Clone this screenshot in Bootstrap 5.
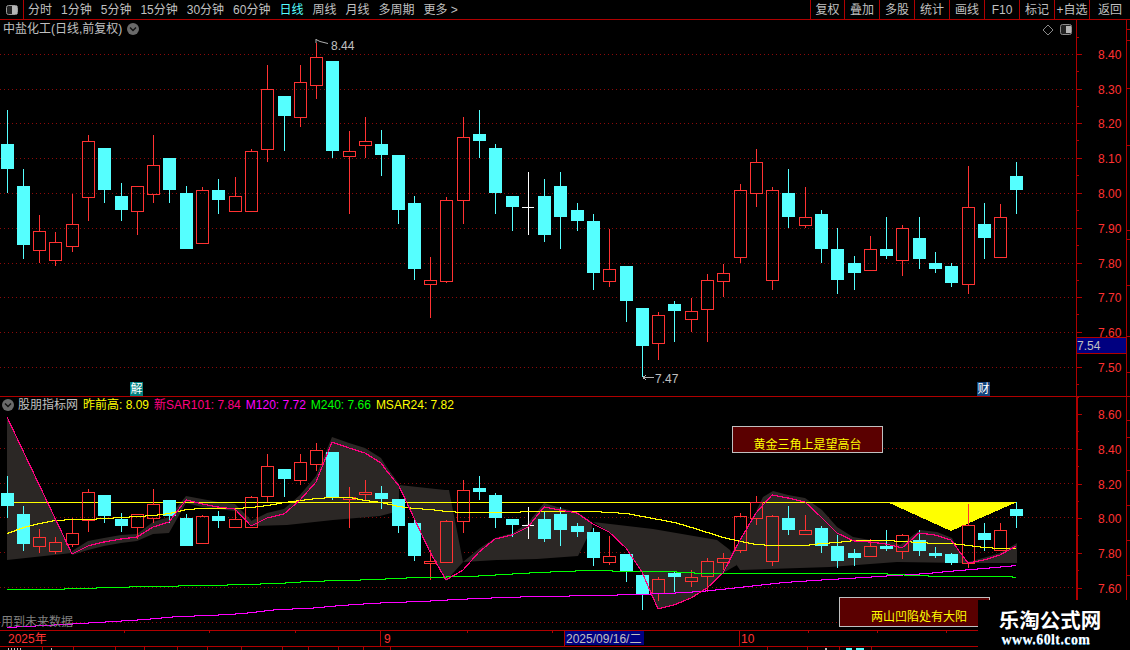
<!doctype html>
<html lang="zh">
<head>
<meta charset="utf-8">
<title>中盐化工</title>
<link href="https://cdn.jsdelivr.net/npm/bootstrap@5.3.0/dist/css/bootstrap.min.css" rel="stylesheet">
<style>
html,body{background:#000;margin:0;overflow:hidden}
.screen{width:1130px;height:650px;background:#000;color:#c0c0c0;font:12px/14px "Liberation Sans","Noto Sans CJK SC",sans-serif;overflow:hidden}
.screen svg{display:block}
.screen svg text{font-family:"Liberation Sans","Noto Sans CJK SC",sans-serif;font-size:12px}
.toolbar{height:20px;border-bottom:1px solid #b00000}
.icon-cell{width:24px;border-right:1px solid #b00000}
.tabs{gap:9px;padding-left:4px}
.tab-on{color:#55ffff}
.tool-cell{width:35px;border-left:1px solid #b00000}
.tool-first{width:34px}
.tool-last{width:41px}
.pane-a{height:377px;border-bottom:1px solid #b00000}
.pane-b{height:234px;border-bottom:1px solid #b00000}
.plot{width:1076px}
.axis{width:54px}
.title-row{left:3px;top:2px;gap:5px;height:14px}
.legend-row{left:2px;top:1px;height:14px}
.lg-gap{margin-left:5px}
.lg-yellow{color:#ffff00}
.lg-pink{color:#ff0080}
.lg-mag{color:#ff00ff}
.lg-green{color:#00ff00}
.evt{width:13px;height:14px;color:#fff;top:362px;line-height:14px;text-align:center}
.evt-a{left:130px;background:#008080}
.evt-b{left:977px;background:#12437a}
.note-box{background:#5a0000;border:1px solid #c0c0c0;color:#ffff00;width:151px}
.note-a{left:732px;top:29px;height:27px;padding-top:11px;text-align:center;padding-right:0}
.note-b{left:839px;top:200px;height:30px;padding:12px 0 0 31px}
.ghost{left:1px;top:218px;color:#808080}
.timebar{height:16px;border-bottom:1px solid #b00000}
.foot{height:3px}
.logo{right:0;bottom:0;width:152px;height:50px;background:#000;color:#fff;text-align:center}
.logo-cn{font:700 20.5px/22px "Noto Sans CJK SC",sans-serif;margin-top:8px;margin-left:-8px}
.logo-en{font:700 14px/16px "Liberation Serif",serif;letter-spacing:.4px;margin-top:2px;margin-left:-16px;text-shadow:0 1px 0 #4aa3d8}
</style>
</head>
<body>
<div class="screen position-relative">
  <div class="toolbar d-flex align-items-center">
    <div class="icon-cell h-100 d-flex align-items-center justify-content-center">
      <svg width="14" height="12" viewBox="0 0 14 12"><rect x="1.5" y="1.5" width="11" height="9" rx="2" fill="#222" stroke="#9a9a9a"/><rect x="7" y="2" width="5" height="8" fill="#b5b5b5"/></svg>
    </div>
    <div class="tabs d-flex">
      <span>分时</span><span>1分钟</span><span>5分钟</span><span>15分钟</span><span>30分钟</span><span>60分钟</span><span class="tab-on">日线</span><span>周线</span><span>月线</span><span>多周期</span><span>更多 &gt;</span>
    </div>
    <div class="d-flex ms-auto h-100">
      <div class="tool-cell tool-first d-flex align-items-center justify-content-center">复权</div>
      <div class="tool-cell d-flex align-items-center justify-content-center">叠加</div>
      <div class="tool-cell d-flex align-items-center justify-content-center">多股</div>
      <div class="tool-cell d-flex align-items-center justify-content-center">统计</div>
      <div class="tool-cell d-flex align-items-center justify-content-center">画线</div>
      <div class="tool-cell d-flex align-items-center justify-content-center">F10</div>
      <div class="tool-cell d-flex align-items-center justify-content-center">标记</div>
      <div class="tool-cell d-flex align-items-center justify-content-center">+自选</div>
      <div class="tool-cell tool-last d-flex align-items-center justify-content-center">返回</div>
    </div>
  </div>

  <div class="pane-a d-flex">
    <div class="plot position-relative">
      <svg id="upper" width="1076" height="376" viewBox="0 20 1076 376"></svg>
      <div class="title-row position-absolute d-flex align-items-center">
        <span>中盐化工(日线,前复权)</span>
        <svg width="12" height="12" viewBox="0 0 12 12"><circle cx="6" cy="6" r="6" fill="#6a6a6a"/><path d="M3 4.5 6 7.5 9 4.5" fill="none" stroke="#111" stroke-width="1.4"/></svg>
      </div>
      <div class="evt evt-a position-absolute">解</div>
      <div class="evt evt-b position-absolute">财</div>
    </div>
    <div class="axis"><svg id="axisA" width="54" height="376" viewBox="1076 20 54 376"></svg></div>
  </div>

  <div class="pane-b d-flex">
    <div class="plot position-relative">
      <svg id="lower" width="1076" height="233" viewBox="0 397 1076 233"></svg>
      <div class="legend-row position-absolute d-flex align-items-center">
        <svg class="me-1" width="12" height="12" viewBox="0 0 12 12"><circle cx="6" cy="6" r="6" fill="#6a6a6a"/><path d="M3 4.5 6 7.5 9 4.5" fill="none" stroke="#111" stroke-width="1.4"/></svg>
        <span>股朋指标网</span>
        <span class="lg-yellow lg-gap">昨前高: 8.09</span>
        <span class="lg-pink lg-gap">新SAR101: 7.84</span>
        <span class="lg-mag lg-gap">M120: 7.72</span>
        <span class="lg-green lg-gap">M240: 7.66</span>
        <span class="lg-yellow lg-gap">MSAR24: 7.82</span>
      </div>
      <div class="note-box note-a position-absolute">黄金三角上是望高台</div>
      <div class="note-box note-b position-absolute">两山凹陷处有大阳</div>
      <div class="ghost position-absolute">用到未来数据</div>
    </div>
    <div class="axis"><svg id="axisB" width="54" height="233" viewBox="1076 397 54 233"></svg></div>
  </div>

  <div class="timebar"><svg id="time" width="1130" height="15" viewBox="0 631 1130 15"></svg></div>
  <div class="foot"><svg id="foot" width="1130" height="3" viewBox="0 647 1130 3"></svg></div>

  <div class="logo position-absolute">
    <div class="logo-cn">乐淘公式网</div>
    <div class="logo-en">www.60lt.com</div>
  </div>
</div>

<script src="https://cdn.jsdelivr.net/npm/bootstrap@5.3.0/dist/js/bootstrap.bundle.min.js"></script>
<script>
var RED='#ff3232',CY='#55ffff',GRID='#8c0a0a',AX='#b00000';
/* x, high, bodyTop, bodyBottom, low, kind: d=down, u=up, w=doji */
var K=[[7,110,144,169,193,'d'],[23,169,186,245,259,'d'],[39,215,231,250,263,'u'],[55,232,242,260,266,'u'],[72,194,224,246,252,'u'],[88,135,141,197,221,'u'],[104,148,148,190,203,'d'],[121,183,196,210,221,'d'],[137,186,186,211,235,'u'],[153,135,165,194,203,'u'],[169,158,158,190,203,'d'],[186,186,193,249,249,'d'],[202,187,190,243,243,'u'],[218,179,190,200,214,'d'],[235,177,196,211,211,'u'],[251,149,151,211,211,'u'],[267,65,89,149,162,'u'],[284,96,96,116,151,'d'],[300,65,82,117,127,'u'],[316,43,57,85,99,'u'],[332,61,61,151,158,'d'],[349,131,151,156,214,'u'],[365,117,141,145,158,'u'],[381,130,144,155,176,'d'],[398,155,155,210,224,'d'],[414,196,203,269,280,'d'],[430,257,280,284,318,'u'],[446,197,200,281,283,'u'],[463,117,137,200,224,'u'],[479,110,134,141,158,'d'],[495,144,148,193,214,'d'],[512,196,196,207,231,'d'],[528,172,207,207,235,'w'],[544,179,196,235,242,'d'],[560,172,186,217,249,'d'],[577,203,210,221,231,'d'],[593,214,221,273,290,'d'],[609,229,269,281,287,'u'],[626,266,266,301,322,'d'],[642,308,308,346,377,'d'],[658,312,315,343,360,'u'],[674,301,304,311,342,'d'],[691,298,311,319,332,'u'],[707,274,280,309,342,'u'],[723,264,273,281,297,'u'],[740,184,190,257,263,'u'],[756,149,162,193,207,'u'],[772,187,190,280,290,'u'],[788,169,193,217,228,'d'],[805,187,217,225,228,'u'],[821,210,214,249,263,'d'],[837,228,249,280,294,'d'],[854,256,263,273,290,'d'],[870,236,249,270,270,'u'],[886,217,249,256,259,'d'],[902,225,228,260,276,'u'],[919,217,238,259,269,'d'],[935,252,263,269,273,'d'],[951,263,266,283,287,'d'],[968,166,207,284,294,'u'],[984,203,224,238,259,'d'],[1000,204,217,257,257,'u'],[1016,162,176,190,214,'d']];
function R(x,y,w,h,f){return '<rect x="'+x+'" y="'+y+'" width="'+w+'" height="'+h+'" fill="'+f+'" shape-rendering="crispEdges"/>';}
function candles(m){var s='';K.forEach(function(c){var x=c[0],hi=m(c[1]),t=m(c[2]),b=m(c[3]),lo=m(c[4]),k=c[5];
 var col=k=='d'?CY:(k=='w'?'#ffffff':RED);
 if(t>hi)s+=R(x,hi,1,t-hi,col);
 if(lo>b)s+=R(x,b,1,lo-b,col);
 if(k=='d')s+=R(x-6,t,13,Math.max(b-t,1),CY);
 else if(k=='w')s+=R(x-6,t,12,1,col);
 else s+='<rect x="'+(x-5.5)+'" y="'+(t+.5)+'" width="12" height="'+Math.max(b-t,1)+'" fill="none" stroke="'+RED+'" shape-rendering="crispEdges"/>';
});return s;}
function grid(ys){return ys.map(function(y){return '<line x1="0" x2="1076" y1="'+(y+.5)+'" y2="'+(y+.5)+'" stroke="'+GRID+'" stroke-dasharray="1 3" shape-rendering="crispEdges"/>';}).join('');}
function poly(p,col,w){return '<polyline points="'+p+'" fill="none" stroke="'+col+'" stroke-width="'+(w||1)+'" shape-rendering="crispEdges"/>';}
/* staircase run of whole pixels between the sampled values, as the charting program paints them */
function steps(p,col){var pts=p.split(' ').map(function(a){return a.split(',').map(Number);});var d='M'+pts[0][0]+' '+(pts[0][1]+.5);
 for(var i=1;i<pts.length;i++){var a=pts[i-1],b=pts[i],n=Math.abs(b[1]-a[1]);
  if(n==0){d+='H'+b[0];continue;}
  for(var j=1;j<=n;j++){d+='H'+Math.round(a[0]+(b[0]-a[0])*(j-.5)/n)+'V'+(a[1]+(b[1]-a[1])*j/n+.5);}
  d+='H'+b[0];}
 return '<path d="'+d+'" fill="none" stroke="'+col+'" shape-rendering="crispEdges"/>';}
function band(p){return '<polygon points="'+p+'" fill="#2b2725"/>';}

var upY=[54,89,123,158,193,228,263,297,332,367],upL=['8.40','8.30','8.20','8.10','8.00','7.90','7.80','7.70','7.60','7.50'];
var u=grid(upY)+candles(function(y){return y;});
u+='<path d="M316 39.5 320 41.5 328 43.5M316 39v4" fill="none" stroke="#b0b0b0"/><text x="331" y="50" fill="#c0c0c0">8.44</text>';
u+='<path d="M643 377.5H654M643 377.5 646 375M643 377.5 646 380" fill="none" stroke="#b0b0b0" shape-rendering="crispEdges"/><text x="655" y="383" fill="#c0c0c0">7.47</text>';
u+='<path d="M1048 25 1053 30 1048 35 1043 30Z" fill="none" stroke="#8a8a8a"/><rect x="1060.5" y="24.5" width="11" height="10" rx="2" fill="#222" stroke="#8a8a8a"/><rect x="1066" y="26" width="5" height="7" fill="#b5b5b5"/>';
document.getElementById('upper').innerHTML=u;

var loY=[448,483,517,552,587,622];
var pink='7,417 72,554 88,546 104,542 121,539 137,537 153,527 169,522 186,500 202,504 218,507 235,509 251,526 267,518 284,514 300,500 316,482 332,442 349,448 365,453 381,463 386,470 399,486 414,518 430,552 446,580 463,570 479,552 495,539 512,535 528,527 544,507 560,510 577,513 593,524 609,532 626,548 642,572 658,609 674,605 691,598 707,588 723,573 740,540 756,513 772,495 788,498 805,502 821,517 837,533 854,541 870,542 886,544 902,548 919,533 935,535 951,540 968,563 984,560 1000,555 1016,546';
var ma='7,533 23,527 39,523 55,520 72,519 88,519 104,518 121,517 137,516 153,515 169,513 186,509 202,508 218,508 235,508 251,507 267,505 284,502 300,500 316,498 332,497 349,497 365,500 381,502 398,506 414,508 430,509 446,511 463,512 479,512 495,512 512,512 528,511 544,511 560,511 577,511 593,511 609,512 626,513 642,516 658,519 674,522 691,527 707,532 723,537 740,541 756,544 772,545 788,545 805,545 821,543 837,542 854,540 870,540 886,540 902,541 919,542 935,543 951,543 968,545 984,547 1000,548 1016,548';
var green='7,589 47,589 80,588 145,586 210,585 243,584 277,583 308,581 340,580 380,579 390,578 422,577 470,576 503,574 537,572 587,570 637,571 667,571 703,573 878,573 912,575 943,576 1008,576 1016,577';
var mag='7,627 63,624 80,623 113,621 145,619 177,616 210,615 243,613 277,609 307,608 340,605 370,603 390,602 422,601 455,599 503,597 537,596 600,595 667,593 700,591 730,588 783,582 813,580 863,577 893,575 927,573 947,571 983,568 1016,565';
var l=grid(loY);
l+=band('7,417 72,553 7,560');
l+=band('72,551 88,541 104,538 121,535 137,534 153,522 169,517 186,496 202,499 218,502 235,504 251,520 251,526 235,511 218,509 202,507 186,503 169,533 153,534 137,541 121,543 104,546 88,550 72,555');
l+=band('251,521 267,513 284,509 300,495 316,476 332,437 349,443 365,448 381,458 386,466 399,484 399,511 380,516 333,520 287,525 251,526');
l+=band('399,485 445,490 449,490 463,562 446,581 430,552 414,518');
l+=band('463,562 480,548 495,538 513,533 528,523 544,503 557,507 577,512 592,522 592,528 578,556 537,559 497,560');
l+=band('593,522 653,529 717,540 730,550 737,565 723,573 707,588 691,598 674,605 658,609 642,572 626,548 609,532');
l+=band('730,555 747,530 763,497 773,491 788,495 805,498 822,510 837,527 853,537 870,540 893,542 900,545 920,530 937,532 952,538 957,548 968,562 983,558 1000,553 1017,543 1017,563 963,563 897,562 830,567 740,570');
l+='<polygon points="887,502 1017,502 951,531" fill="#ffff00" shape-rendering="crispEdges"/>';
l+=poly('7,502.5 1016,502.5','#ffff00');
l+=candles(function(y){return Math.round(448+(y-54)/2);});
l+=steps(mag,'#ff00ff')+steps(green,'#00ff00')+steps(ma,'#ffff00')+poly(pink,'#ff0080',1.2);
document.getElementById('lower').innerHTML=l;

function axis(id,ys,labs,y0,y1,w){var s=R(1076,y0,w,y1-y0,AX)+R(1126,y0,1,y1-y0,AX);
 var d=ys.length>1?(ys[ys.length-1]-ys[0])/(ys.length-1)/2:0;
 for(var i=0;i<ys.length;i++){s+=R(1076,ys[i],6,1,AX);s+=R(1076,Math.round(ys[i]+d),3,1,AX);if(i==0)s+=R(1076,Math.round(ys[i]-d),3,1,AX);
  s+='<text x="1098" y="'+(ys[i]+5)+'" fill="'+RED+'">'+labs[i]+'</text>';}
 return s;}
var a=axis('a',upY,upL,20,396,1);
[29,40,88,145,230,285,336,372].forEach(function(y){a+=R(1127,y,3,1,AX);});
a+=R(1126,239,4,1,AX);
a+='<rect x="1076.5" y="337.5" width="50" height="16" fill="#000080" stroke="#b00000"/><text x="1077" y="350" fill="#c0c0c0">7.54</text>';
document.getElementById('axisA').innerHTML=a;
var b=axis('b',[414,449,484,518,553,588],['8.60','8.40','8.20','8.00','7.80','7.60'],397,630,2);
[420,437,470,505,540,575,610].forEach(function(y){b+=R(1127,y,3,1,AX);});
document.getElementById('axisB').innerHTML=b;

var t='<text x="8" y="643" fill="'+RED+'">2025年</text><text x="384" y="643" fill="'+RED+'">9</text><text x="741" y="643" fill="'+RED+'">10</text>';
[124,209,295,467,552,637,808,877,946].forEach(function(x){t+=R(x,631,1,2,AX);});
t+=R(380,631,1,15,AX)+R(739,631,1,15,AX);
t+=R(565,631,79,14,'#000080')+R(564,631,1,15,AX)+'<text x="566" y="643" fill="#c0c0c0">2025/09/16/二</text>';
document.getElementById('time').innerHTML=t;
var f='';[42,73,115,144,177,207,241,282,308,338,363,390,767,807,839,871].forEach(function(x){f+=R(x,647,1,3,AX);});
[8,11,14,17,20,51].forEach(function(x){f+=R(x,648,1,2,'#c0c0c0');});
[825].forEach(function(x){f+=R(x,648,2,2,'#c0c0c0');});
f+=R(846,648,6,2,CY)+R(856,648,8,2,CY);
document.getElementById('foot').innerHTML=f;
</script>
</body>
</html>
